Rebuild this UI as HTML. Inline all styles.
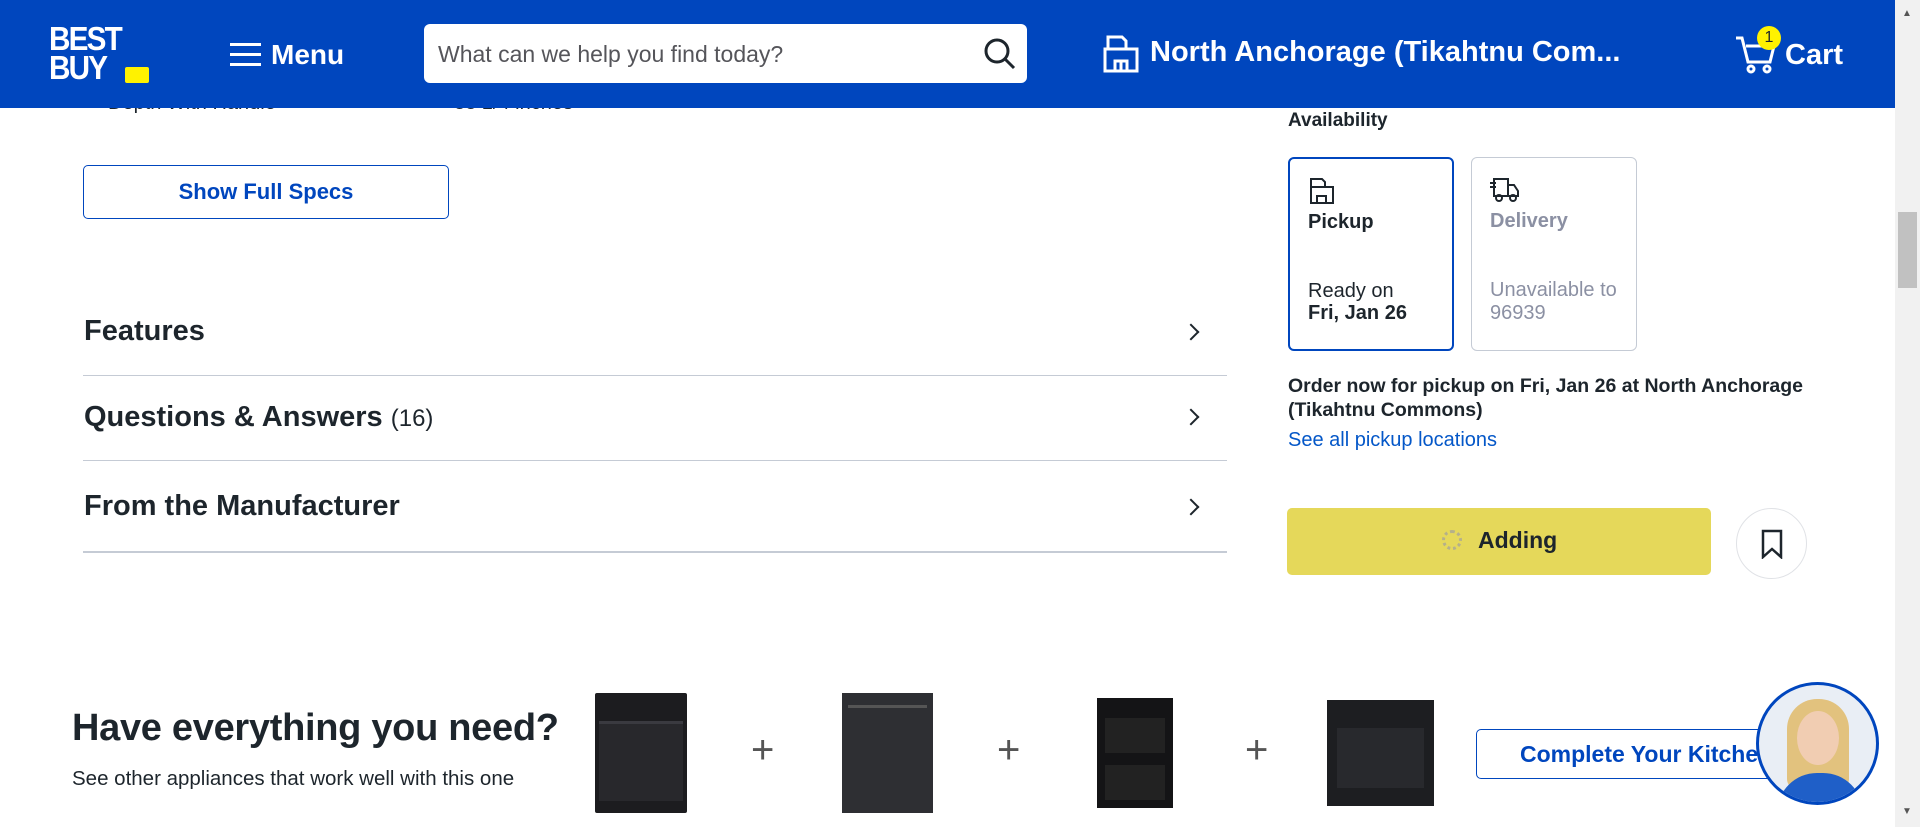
<!DOCTYPE html>
<html><head><meta charset="utf-8"><style>
*{margin:0;padding:0;box-sizing:border-box}
body{width:1920px;height:827px;overflow:hidden;background:#fff;font-family:"Liberation Sans",Arial,sans-serif;color:#1d252c;position:relative}
.a{position:absolute}
.hdr{left:0;top:0;width:1895px;height:108px;background:#0046be;z-index:5}
.w{color:#fff;font-weight:bold}
.row{left:83px;width:1144px;height:1px;background:#c5cbd5}
.sec{left:84px;font-size:29px;font-weight:bold;white-space:nowrap}
.chev{left:1185px;width:12px;height:12px;border-right:2px solid #1d252c;border-top:2px solid #1d252c;transform:rotate(45deg)}
.card{top:157px;width:166px;height:194px;border-radius:6px}
.plus{font-size:40px;color:#555;font-weight:300}
</style></head><body>
<div class="a" style="left:108px;top:92px;font-size:20px">Depth With Handle</div>
<div class="a" style="left:454px;top:92px;font-size:20px">33 1/4 inches</div>
<div class="a hdr">
 <div class="a w" style="left:49px;top:24px;font-size:33px;line-height:29px;letter-spacing:-2px;transform:scaleX(0.9);transform-origin:left">BEST<br>BUY</div>
 <div class="a" style="left:125px;top:67px;width:24px;height:16px;background:#fff200;border-radius:2px"></div>
 <div class="a" style="left:230px;top:43px;width:31px;height:3px;background:#fff;box-shadow:0 10px 0 #fff,0 20px 0 #fff"></div>
 <div class="a w" style="left:271px;top:39px;font-size:28px">Menu</div>
 <div class="a" style="left:424px;top:24px;width:603px;height:59px;background:#fff;border-radius:6px"></div>
 <div class="a" style="left:438px;top:41px;font-size:23px;color:#55555a">What can we help you find today?</div>
 <svg class="a" style="left:983px;top:37px" width="34" height="34" viewBox="0 0 34 34"><circle cx="14" cy="14" r="11" fill="none" stroke="#1d252c" stroke-width="3"/><line x1="22" y1="22" x2="31" y2="31" stroke="#1d252c" stroke-width="3"/></svg>
 <svg class="a" style="left:1102px;top:34px" width="38" height="40" viewBox="0 0 38 40" fill="none" stroke="#fff" stroke-width="3"><path d="M6 3h14l4 4v8H6z"/><path d="M3 15h32v22H3z"/><path d="M13 37V27h12v10M19 27v10"/></svg>
 <div class="a w" style="left:1150px;top:36px;font-size:29px;white-space:nowrap">North Anchorage (Tikahtnu Com...</div>
 <svg class="a" style="left:1734px;top:34px" width="44" height="40" viewBox="0 0 44 40" fill="none" stroke="#fff" stroke-width="3"><path d="M2 4h6l6 24h22l4-16H12"/><circle cx="17" cy="35" r="3"/><circle cx="33" cy="35" r="3"/></svg>
 <div class="a" style="left:1757px;top:26px;width:24px;height:24px;border-radius:50%;background:#fff200;color:#1d252c;font-size:16px;text-align:center;line-height:24px">1</div>
 <div class="a w" style="left:1785px;top:39px;font-size:29px">Cart</div>
</div>
<div class="a" style="left:1895px;top:0;width:25px;height:827px;background:#f1f1f1"></div>
<div class="a" style="left:1898px;top:212px;width:19px;height:76px;background:#c1c1c1"></div>
<div class="a" style="left:1902px;top:8px;font-size:10px;color:#555">▲</div>
<div class="a" style="left:1902px;top:806px;font-size:10px;color:#555">▼</div>

<div class="a" style="left:83px;top:165px;width:366px;height:54px;border:1px solid #0046be;border-radius:5px;color:#0046be;font-weight:bold;font-size:22px;text-align:center;line-height:52px">Show Full Specs</div>
<div class="a sec" style="top:315px">Features</div><div class="a chev" style="top:326px"></div>
<div class="a row" style="top:375px"></div>
<div class="a sec" style="top:401px">Questions &amp; Answers <span style="font-weight:normal;font-size:24px">(16)</span></div><div class="a chev" style="top:411px"></div>
<div class="a row" style="top:460px"></div>
<div class="a sec" style="top:490px">From the Manufacturer</div><div class="a chev" style="top:501px"></div>
<div class="a row" style="top:551px;height:2px"></div>

<div class="a" style="left:1288px;top:110px;font-size:19px;font-weight:bold">Availability</div>
<div class="a card" style="left:1288px;border:2px solid #0046be"></div>
<svg class="a" style="left:1308px;top:177px" width="28" height="28" viewBox="0 0 28 28" fill="none" stroke="#1d252c" stroke-width="2"><path d="M3 2h11l3 3v5H3z"/><path d="M3 10h22v16H3z"/><path d="M9 26v-7h9v7"/></svg>
<div class="a" style="left:1308px;top:211px;font-size:20px;font-weight:bold">Pickup</div>
<div class="a" style="left:1308px;top:280px;font-size:20px">Ready on</div>
<div class="a" style="left:1308px;top:302px;font-size:20px;font-weight:bold">Fri, Jan 26</div>
<div class="a card" style="left:1471px;border:1px solid #c5cbd5"></div>
<svg class="a" style="left:1489px;top:177px" width="32" height="26" viewBox="0 0 32 26" fill="none" stroke="#1d252c" stroke-width="2"><path d="M5 2h14v17H5zM19 8h6l4 6v5H19"/><circle cx="10" cy="21" r="3"/><circle cx="24" cy="21" r="3"/><path d="M1 6h6M1 10h6"/></svg>
<div class="a" style="left:1490px;top:210px;font-size:20px;font-weight:bold;color:#8b90a3">Delivery</div>
<div class="a" style="left:1490px;top:279px;font-size:20px;color:#8b90a3;line-height:23px">Unavailable to<br>96939</div>
<div class="a" style="left:1288px;top:374px;font-size:19.5px;font-weight:bold;line-height:24px;width:570px">Order now for pickup on Fri, Jan 26 at North Anchorage (Tikahtnu Commons)</div>
<div class="a" style="left:1288px;top:429px;font-size:20px;color:#0457c8">See all pickup locations</div>
<div class="a" style="left:1287px;top:508px;width:424px;height:67px;background:#e5d85a;border-radius:5px"></div>
<div class="a" style="left:1442px;top:530px;width:20px;height:20px;border-radius:50%;border:3px dotted #b5b08a"></div>
<div class="a" style="left:1478px;top:527px;font-size:23px;font-weight:bold">Adding</div>
<div class="a" style="left:1736px;top:508px;width:71px;height:71px;border-radius:50%;border:1px solid #e0e2e6"></div>
<svg class="a" style="left:1761px;top:529px" width="22" height="30" viewBox="0 0 22 30" fill="none" stroke="#1d252c" stroke-width="2.5"><path d="M2 2h18v26l-9-8-9 8z"/></svg>

<div class="a" style="left:72px;top:707px;font-size:38px;font-weight:bold;letter-spacing:-0.3px">Have everything you need?</div>
<div class="a" style="left:72px;top:767px;font-size:20.5px">See other appliances that work well with this one</div>
<div class="a" style="left:595px;top:693px;width:92px;height:120px;background:#1c1c1f;border-radius:2px"><div style="margin:28px 4px 0;height:80px;background:#28282c;border-top:3px solid #3a3a40"></div></div>
<div class="a" style="left:842px;top:693px;width:91px;height:120px;background:#2e2f33"><div style="margin:12px 6px 0;height:3px;background:#555"></div></div>
<div class="a" style="left:1097px;top:698px;width:76px;height:110px;background:#141416"><div style="margin:20px 8px 0;height:35px;background:#222"></div><div style="margin:12px 8px 0;height:35px;background:#222"></div></div>
<div class="a" style="left:1327px;top:700px;width:107px;height:106px;background:#1d1e21"><div style="margin:28px 10px 0;height:60px;background:#28292d"></div></div>
<div class="a plus" style="left:751px;top:728px">+</div>
<div class="a plus" style="left:997px;top:728px">+</div>
<div class="a plus" style="left:1245px;top:728px">+</div>
<div class="a" style="left:1476px;top:729px;width:300px;height:50px;border:1px solid #0046be;border-radius:5px;color:#0046be;font-weight:bold;font-size:23px;line-height:48px;padding-left:43px;white-space:nowrap;overflow:hidden">Complete Your Kitchen</div>
<div class="a" style="left:1756px;top:682px;width:123px;height:123px;border-radius:50%;border:3px solid #0046be;background:#e9eef5;overflow:hidden">
 <div class="a" style="left:28px;top:14px;width:62px;height:90px;border-radius:30px 30px 10px 10px;background:#e2c27e"></div>
 <div class="a" style="left:38px;top:26px;width:42px;height:54px;border-radius:50%;background:#f1cdb2"></div>
 <div class="a" style="left:18px;top:88px;width:86px;height:40px;border-radius:40px 40px 0 0;background:#1f5fc8"></div>
</div>
</body></html>
